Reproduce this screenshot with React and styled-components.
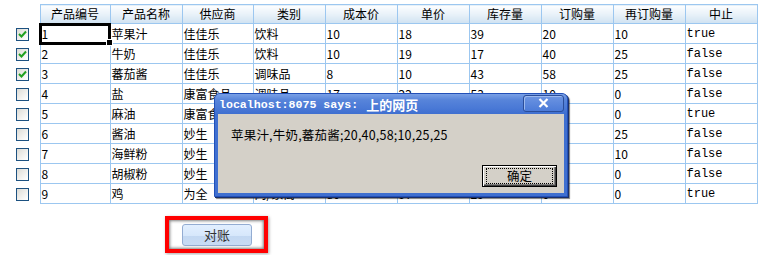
import React from 'react'
import styled, { createGlobalStyle, css } from 'styled-components';

const Global = createGlobalStyle`
  body {
    margin: 0;
    background: #fff;
    font-family: "Noto Sans CJK SC", "DejaVu Sans", sans-serif;
    font-size: 12px;
    color: #000;
  }
`;

const Page = styled.div`
  position: relative;
  width: 764px;
  height: 255px;
  padding-top: 4px;
  box-sizing: border-box;
  overflow: hidden;
`;

const Grid = styled.table`
  border-collapse: collapse;
  table-layout: fixed;
  width: 757px;
`;

const HeadCell = styled.th`
  height: 18px;
  padding: 0;
  border: 1px solid #9cc7f0;
  background: linear-gradient(#fdfeff, #e6f0f8 55%, #cfe2f1);
  font-weight: normal;
  font-size: 12px;
  line-height: 18px;
  text-align: center;
`;

const BlankHead = styled.th`
  padding: 0;
  border: none;
  border-right: 1px solid #9cc7f0;
  background: #fff;
`;

const Cell = styled.td`
  position: relative;
  height: 19px;
  padding: ${p => p.$mono ? '2px 0 0 1px' : '0 0 0 1px'};
  box-sizing: border-box;
  border: 1px solid #9cc7f0;
  font-family: ${p => p.$mono ? '"Liberation Mono", monospace' : '"Noto Sans CJK SC", sans-serif'};
  font-size: 12px;
  line-height: ${p => p.$mono ? '17px' : '19px'};
  white-space: nowrap;

  ${p => p.$active && css`
    outline: 3px solid #000;
    outline-offset: -2px;

    &::after {
      content: "";
      position: absolute;
      right: -3px;
      bottom: -3px;
      width: 5px;
      height: 5px;
      background: #000;
      border: 1px solid #fff;
      z-index: 2;
    }
  `}
`;

const CheckCell = styled.td`
  padding: 0 0 0 16px;
  border: none;
  border-right: 1px solid #9cc7f0;
  vertical-align: middle;
`;

const Box = styled.span`
  display: flex;
  align-items: center;
  justify-content: center;
  width: 11px;
  height: 11px;
  border: 1px solid #1c5180;
  background: linear-gradient(135deg, #dcdbd5, #f6f6f4 70%, #fff);
  margin-top: 1px;
`;

const Dialog = styled.div`
  position: absolute;
  z-index: 5;
  left: 214px;
  top: 93px;
  width: 354px;
  height: 104px;
  box-sizing: border-box;
  display: flex;
  flex-direction: column;
  background: #3f6fd0;
  border: 1px solid #2250b8;
  border-radius: 6px 6px 0 0;
  box-shadow: 1px 1px 0 #1a2f6a, 2px 2px 1px rgba(0,0,0,.5);
`;

const TitleBar = styled.div`
  height: 20px;
  display: flex;
  align-items: center;
  padding-left: 4px;
  background: linear-gradient(#7aa0e6, #5784da 30%, #4a79d6 70%, #3f6fd0);
  border-radius: 5px 5px 0 0;
  color: #fff;
`;

const Host = styled.span`
  font-family: "Liberation Mono", monospace;
  font-weight: bold;
  font-size: 11.6px;
`;

const TitleCjk = styled.span`
  margin-left: 8px;
  font-weight: bold;
  font-size: 13px;
`;

const CloseBtn = styled.span`
  margin-left: auto;
  margin-right: 3px;
  margin-top: -2px;
  width: 41px;
  height: 17px;
  box-sizing: border-box;
  border: 1px solid #2a4d9a;
  border-radius: 3px;
  background: linear-gradient(#6d95e2, #4c7bd8);
  box-shadow: inset 1px 1px 0 #9cb9ee;
  display: flex;
  align-items: center;
  justify-content: center;
`;

const Body = styled.div`
  flex: 1;
  margin: 0 3px 3px;
  background: #d4d0c8;
  display: flex;
  flex-direction: column;
  padding: 13px 7px 6px 13px;
`;

const Message = styled.div`
  font-size: 12.5px;
  line-height: 16px;
  letter-spacing: 0.2px;
`;

const OkBtn = styled.button`
  margin-top: auto;
  align-self: flex-end;
  width: 75px;
  height: 22px;
  padding: 2px;
  border: 1px solid #000;
  background: #d4d0c8;
  box-shadow: inset 1px 1px 0 #fff, inset -1px -1px 0 #404040, inset -2px -2px 0 #808080;
  font-family: "Noto Sans CJK SC", sans-serif;
  font-size: 12.5px;
  color: #000;

  span {
    display: block;
    height: 100%;
    box-sizing: border-box;
    border: 1px dotted #000;
    line-height: 14px;
    margin: 0 1px;
  }
`;

const Highlight = styled.div`
  margin: 12px 0 0 165px;
  width: 103px;
  height: 37px;
  box-sizing: border-box;
  border: 4px solid #ff0000;
  box-shadow: inset 0 0 3px 1px rgba(0,0,0,.5), 1px 1px 3px rgba(0,0,0,.35);
  display: flex;
  align-items: center;
  padding-left: 13px;
`;

const ActionBtn = styled.button`
  width: 70px;
  height: 22px;
  padding: 0;
  border: 1px solid #93acd2;
  border-radius: 3px;
  background: linear-gradient(#e2efff, #d6e7fb 55%, #c3d8f2 56%, #c8dcf4);
  font-family: "Noto Sans CJK SC", sans-serif;
  font-size: 13px;
  color: #333;
`;

const headers = ['产品编号', '产品名称', '供应商', '类别', '成本价', '单价', '库存量', '订购量', '再订购量', '中止'];
const widths = [40, 70, 72, 71, 72, 72, 72, 72, 72, 72, 72];

const rows = [
  [true, '1', '苹果汁', '佳佳乐', '饮料', '10', '18', '39', '20', '10', 'true'],
  [true, '2', '牛奶', '佳佳乐', '饮料', '10', '19', '17', '40', '25', 'false'],
  [true, '3', '蕃茄酱', '佳佳乐', '调味品', '8', '10', '43', '58', '25', 'false'],
  [false, '4', '盐', '康富食品', '调味品', '17', '22', '53', '10', '0', 'false'],
  [false, '5', '麻油', '康富食品', '调味品', '15', '21', '120', '0', '0', 'true'],
  [false, '6', '酱油', '妙生', '调味品', '20', '25', '15', '0', '25', 'false'],
  [false, '7', '海鲜粉', '妙生', '特制品', '25', '30', '29', '0', '10', 'false'],
  [false, '8', '胡椒粉', '妙生', '调味品', '30', '40', '6', '0', '0', 'false'],
  [false, '9', '鸡', '为全', '肉/家禽', '80', '97', '29', '0', '0', 'true'],
];

function Check() {
  return (
    <svg width="9" height="8" viewBox="0 0 9 8">
      <path d="M1 4 L3.5 6.5 L8 1.5" fill="none" stroke="#21a121" strokeWidth="2" />
    </svg>
  );
}

function App() {
  return (
    <Page>
      <Global />
      <Grid>
        <colgroup>
          {widths.map((w, i) => <col key={i} style={{ width: w }} />)}
        </colgroup>
        <thead>
          <tr>
            <BlankHead />
            {headers.map(h => <HeadCell key={h}>{h}</HeadCell>)}
          </tr>
        </thead>
        <tbody>
          {rows.map((r, ri) => (
            <tr key={ri}>
              <CheckCell>
                <Box>{r[0] && <Check />}</Box>
              </CheckCell>
              {r.slice(1).map((v, ci) => (
                <Cell key={ci} $mono={ci === 9} $active={ri === 0 && ci === 0}>
                  {v}
                </Cell>
              ))}
            </tr>
          ))}
        </tbody>
      </Grid>

      <Highlight>
        <ActionBtn>对账</ActionBtn>
      </Highlight>

      <Dialog>
        <TitleBar>
          <Host>localhost:8075 says:</Host>
          <TitleCjk>上的网页</TitleCjk>
          <CloseBtn>
            <svg width="11" height="10" viewBox="0 0 11 10">
              <path d="M1.5 1 L9.5 9 M9.5 1 L1.5 9" stroke="#fff" strokeWidth="2.2" />
            </svg>
          </CloseBtn>
        </TitleBar>
        <Body>
          <Message>苹果汁,牛奶,蕃茄酱;20,40,58;10,25,25</Message>
          <OkBtn><span>确定</span></OkBtn>
        </Body>
      </Dialog>
    </Page>
  )
}

export default App
